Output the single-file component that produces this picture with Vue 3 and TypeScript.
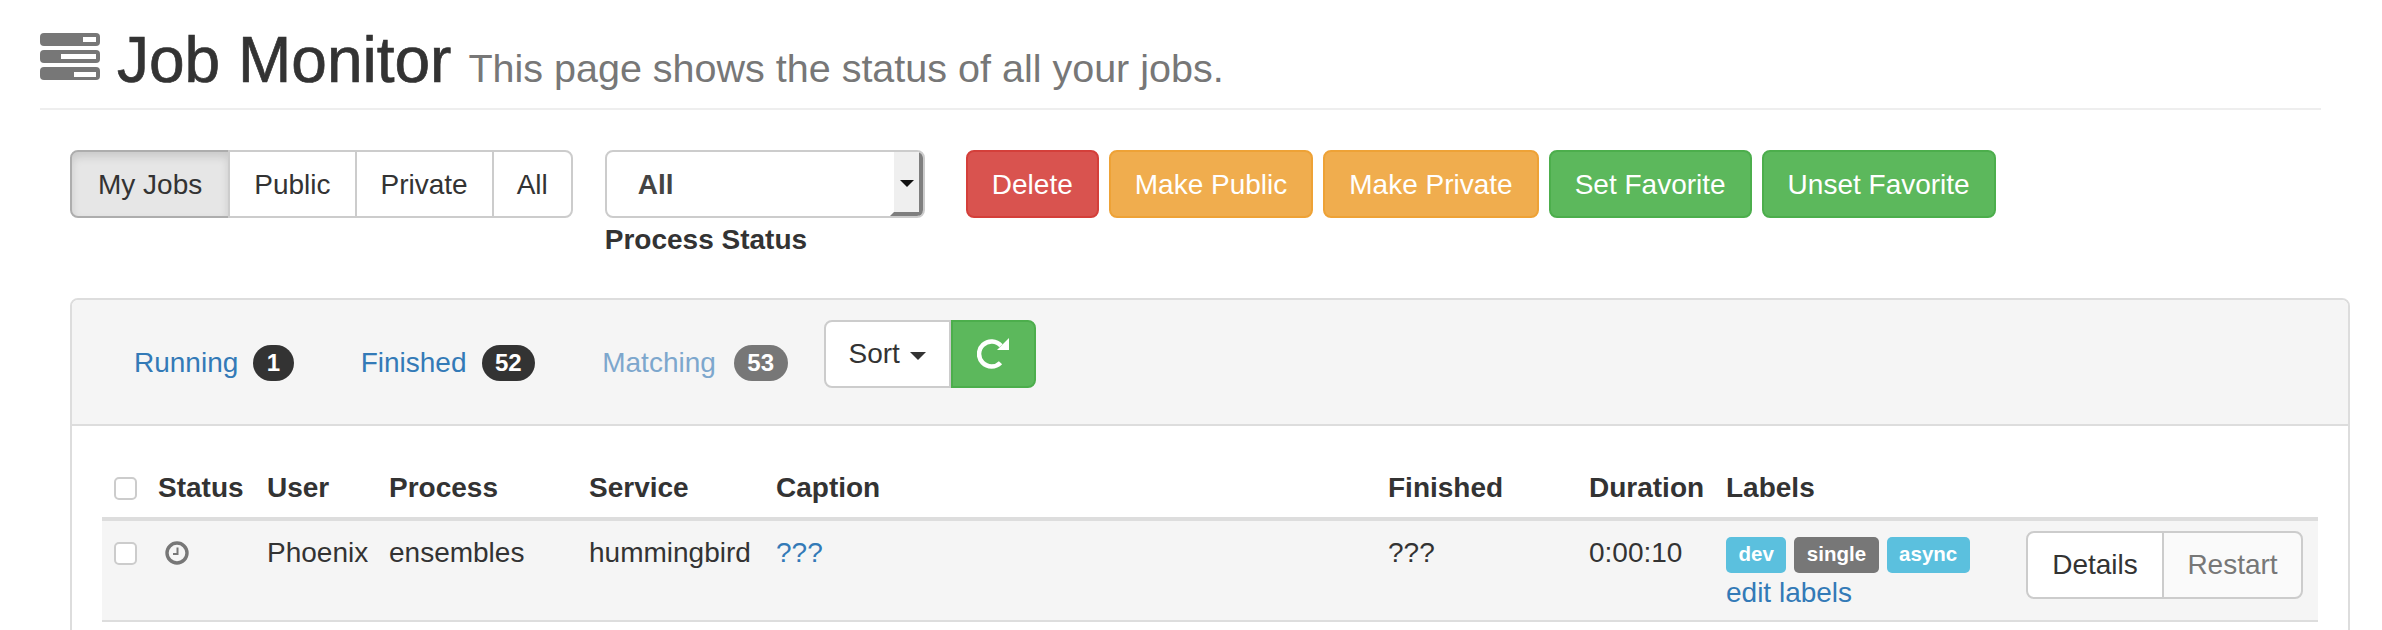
<script setup lang="ts">
interface Tab {
  name: string;
  count: number;
  muted?: boolean;
}

interface Label {
  text: string;
  kind: 'info' | 'plain';
}

const scopes = ['My Jobs', 'Public', 'Private', 'All'];

const actions = [
  { text: 'Delete', kind: 'danger' },
  { text: 'Make Public', kind: 'warning' },
  { text: 'Make Private', kind: 'warning' },
  { text: 'Set Favorite', kind: 'success' },
  { text: 'Unset Favorite', kind: 'success' },
];

const tabs: Tab[] = [
  { name: 'Running', count: 1 },
  { name: 'Finished', count: 52 },
  { name: 'Matching', count: 53, muted: true },
];

const columns = ['Status', 'User', 'Process', 'Service', 'Caption', 'Finished', 'Duration', 'Labels'];

const labels: Label[] = [
  { text: 'dev', kind: 'info' },
  { text: 'single', kind: 'plain' },
  { text: 'async', kind: 'info' },
];
</script>

<template>
  <div class="page">
    <header class="page-header">
      <svg class="server-icon" width="60" height="48" viewBox="0 0 60 48">
        <rect x="0" y="0" width="60" height="13" rx="4" fill="#777" />
        <rect x="0" y="17" width="60" height="13" rx="4" fill="#777" />
        <rect x="0" y="34" width="60" height="13" rx="4" fill="#777" />
        <rect x="43" y="4" width="13" height="5" fill="#fff" />
        <rect x="21" y="21" width="35" height="5" fill="#fff" />
        <rect x="34" y="39" width="22" height="5" fill="#fff" />
      </svg>
      <h1>Job Monitor</h1>
      <small>This page shows the status of all your jobs.</small>
    </header>

    <div class="toolbar">
      <div class="btn-group scope-group">
        <button
          v-for="(scope, i) in scopes"
          :key="scope"
          class="btn"
          :class="{ active: i === 0 }"
        >
          {{ scope }}
        </button>
      </div>

      <div class="status-filter">
        <div class="select">
          <span class="select-value">All</span>
          <span class="select-arrow"></span>
        </div>
        <label>Process Status</label>
      </div>

      <div class="actions">
        <button v-for="a in actions" :key="a.text" class="btn solid" :class="a.kind">
          {{ a.text }}
        </button>
      </div>
    </div>

    <section class="panel">
      <div class="panel-heading">
        <a
          v-for="tab in tabs"
          :key="tab.name"
          class="tab"
          :class="{ muted: tab.muted }"
        >
          {{ tab.name }}
          <span class="badge">{{ tab.count }}</span>
        </a>
        <div class="sort-group">
          <button class="btn sort">Sort <span class="caret"></span></button>
          <button class="btn solid success refresh">
            <svg width="32" height="32" viewBox="0 0 32 32">
              <path
                d="M24 7.8A12.5 12.5 0 1 0 23.5 24.7"
                fill="none"
                stroke="#fff"
                stroke-width="4.5"
              />
              <path d="M32 0V12H20z" fill="#fff" />
            </svg>
          </button>
        </div>
      </div>

      <div class="panel-body">
        <table>
          <colgroup>
            <col style="width: 44px" />
            <col style="width: 109px" />
            <col style="width: 122px" />
            <col style="width: 200px" />
            <col style="width: 187px" />
            <col style="width: 612px" />
            <col style="width: 201px" />
            <col style="width: 137px" />
            <col style="width: 300px" />
            <col style="width: 304px" />
          </colgroup>
          <thead>
            <tr>
              <th><span class="check"></span></th>
              <th v-for="c in columns" :key="c">{{ c }}</th>
              <th></th>
            </tr>
          </thead>
          <tbody>
            <tr>
              <td><span class="check"></span></td>
              <td>
                <svg class="clock" width="24" height="24" viewBox="0 0 24 24">
                  <circle cx="12" cy="12" r="10" fill="none" stroke="#777" stroke-width="3.4" />
                  <path d="M12.5 6.5v6.5H8" fill="none" stroke="#777" stroke-width="2" />
                </svg>
              </td>
              <td>Phoenix</td>
              <td>ensembles</td>
              <td>hummingbird</td>
              <td><a class="link">???</a></td>
              <td>???</td>
              <td>0:00:10</td>
              <td>
                <div class="labels">
                  <span v-for="l in labels" :key="l.text" class="label" :class="l.kind">
                    {{ l.text }}
                  </span>
                </div>
                <a class="link edit">edit labels</a>
              </td>
              <td>
                <div class="btn-group row-actions">
                  <button class="btn details">Details</button>
                  <button class="btn restart">Restart</button>
                </div>
              </td>
            </tr>
          </tbody>
        </table>
      </div>
    </section>
  </div>
</template>

<style>
html,
body {
  background: #fff;
  overflow: hidden;
}
</style>

<style scoped>
.page {
  width: 2382px;
  height: 630px;
  overflow: hidden;
  font-family: 'Liberation Sans', Arial, sans-serif;
  font-size: 28px;
  color: #333;
}

.page-header {
  display: flex;
  align-items: baseline;
  height: 75px;
  margin: 33px 61px 0 40px;
  border-bottom: 2px solid #eee;
}

.server-icon {
  align-self: flex-start;
  margin-right: 17px;
}

h1 {
  margin: 0 17px 0 0;
  font-size: 64px;
  font-weight: 500;
  line-height: 54px;
  -webkit-text-stroke: 0.7px #333;
}

small {
  font-size: 39.5px;
  color: #777;
}

.toolbar {
  display: flex;
  align-items: flex-start;
  margin: 40px 0 0 70px;
}

.btn {
  height: 68px;
  padding: 2px 24px 0;
  border: 2px solid #ccc;
  border-radius: 8px;
  background: #fff;
  color: #333;
  font: inherit;
  white-space: nowrap;
}

.btn-group {
  display: flex;
}

.btn-group .btn {
  border-radius: 0;
  margin-left: -2px;
}

.btn-group .btn:first-child {
  border-radius: 8px 0 0 8px;
  margin-left: 0;
}

.btn-group .btn:last-child {
  border-radius: 0 8px 8px 0;
}

.scope-group .btn:first-child {
  padding: 2px 26px 0;
}

.scope-group .btn:last-child {
  padding: 2px 23px 0;
}

.btn.active {
  background: #e6e6e6;
  border-color: #adadad;
  box-shadow: inset 0 5px 8px rgba(0, 0, 0, 0.125);
}

.status-filter {
  width: 320px;
  margin-left: 32px;
}

.select {
  display: flex;
  justify-content: space-between;
  align-items: stretch;
  height: 68px;
  box-sizing: border-box;
  border: 2px solid #ccc;
  border-radius: 8px;
  background: #fff;
  font-weight: 700;
  overflow: hidden;
}

.select-value {
  padding-left: 31px;
  line-height: 66px;
  color: #444;
}

.select-arrow {
  position: relative;
  width: 25px;
  background: #efefef;
  border-left: 4px solid #fff;
  border-right: 4px solid #7f7f7f;
  border-bottom: 4px solid #7f7f7f;
}

.select-arrow::after {
  content: '';
  position: absolute;
  left: 6px;
  top: 28px;
  border-left: 7px solid transparent;
  border-right: 7px solid transparent;
  border-top: 7px solid #111;
}

label {
  display: block;
  margin-top: 4px;
  font-weight: 700;
  line-height: 36px;
}

.actions {
  display: flex;
  gap: 10px;
  margin-left: 41px;
}

.solid {
  color: #fff;
}

.danger {
  background: #d9534f;
  border-color: #d43f3a;
}

.warning {
  background: #f0ad4e;
  border-color: #eea236;
}

.success {
  background: #5cb85c;
  border-color: #4cae4c;
}

.panel {
  margin: 40px 32px 0 70px;
  height: 400px;
  border: 2px solid #ddd;
  border-radius: 8px;
  box-sizing: border-box;
}

.panel-heading {
  display: flex;
  align-items: center;
  height: 124px;
  padding-left: 62px;
  background: #f5f5f5;
  border-bottom: 2px solid #ddd;
  border-radius: 6px 6px 0 0;
}

.tab {
  display: flex;
  align-items: center;
  gap: 15px;
  margin: 2px 67px 0 0;
  color: #337ab7;
}

.tab.muted {
  gap: 18px;
  color: #7da7cd;
  margin-right: 36px;
}

.badge {
  min-width: 13px;
  height: 36px;
  padding: 0 13.5px;
  border-radius: 20px;
  background: #333;
  color: #fff;
  font-size: 24px;
  font-weight: 700;
  line-height: 36px;
  text-align: center;
}

.muted .badge {
  background: #777;
}

.sort-group {
  display: flex;
  align-self: flex-start;
  margin-top: 20px;
}

.sort {
  width: 127px;
  border-radius: 8px 0 0 8px;
  padding: 0;
}

.caret {
  display: inline-block;
  margin-left: 2px;
  vertical-align: middle;
  border-top: 8px solid #333;
  border-left: 8px solid transparent;
  border-right: 8px solid transparent;
}

.refresh {
  display: flex;
  align-items: center;
  justify-content: center;
  width: 85px;
  padding: 0;
  border-radius: 0 8px 8px 0;
}

.panel-body {
  padding: 44px 0 0 30px;
}

table {
  width: 2216px;
  table-layout: fixed;
  border-collapse: collapse;
}

th,
td {
  padding: 0 0 0 12px;
  text-align: left;
  vertical-align: top;
}

th {
  padding-bottom: 11px;
  font-weight: 700;
  line-height: 36px;
  white-space: nowrap;
  border-bottom: 4px solid #ddd;
}

tbody tr {
  height: 102px;
  background: #f5f5f5;
  border-bottom: 2px solid #ddd;
}

td {
  padding-top: 14px;
  line-height: 36px;
  white-space: nowrap;
}

.check {
  display: block;
  width: 23px;
  height: 23px;
  margin-top: 7px;
  box-sizing: border-box;
  border: 2px solid #ccc;
  border-radius: 5px;
  background: #fff;
}

.clock {
  display: block;
  margin: 6px 0 0 7px;
}

.link {
  color: #337ab7;
}

.labels {
  display: flex;
  gap: 8px;
  height: 36px;
  margin-top: 2px;
}

.label {
  padding: 0 12.5px;
  border-radius: 5px;
  color: #fff;
  font-size: 20.5px;
  font-weight: 700;
  line-height: 34px;
}

.label.info {
  background: #5bc0de;
}

.label.plain {
  background: #777;
}

.edit {
  display: block;
  margin-top: 2px;
  line-height: 36px;
}

.row-actions {
  margin-top: -4px;
}

.btn-group .details {
  width: 138px;
  padding: 0;
  background: #fff;
}

.btn-group .restart {
  width: 141px;
  padding: 0;
  background: #fafafa;
  color: #777;
}
</style>
